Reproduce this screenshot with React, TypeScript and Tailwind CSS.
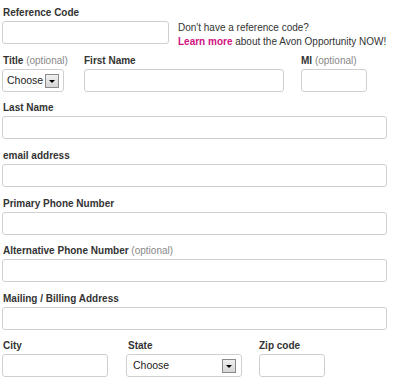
import React from "react";

const font = "font-['Liberation_Sans',Arial,sans-serif]";

function Label({ text, optional, className = "" }: { text: string; optional?: boolean; className?: string }) {
  return (
    <div className={`h-[16px] text-[10px] leading-[16px] font-bold text-[#333] whitespace-nowrap ${className}`}>
      {text}
      {optional && <span className="font-normal text-[#888]"> (optional)</span>}
    </div>
  );
}

function Input({ className = "" }: { className?: string }) {
  return <div className={`h-[23px] border border-[#cfcfcf] rounded-[3px] bg-white ${className}`} />;
}

function Select({ className = "" }: { className?: string }) {
  return (
    <div
      className={`h-[23px] border border-[#cfcfcf] rounded-[3px] bg-white flex items-center justify-between ${className}`}
    >
      <span className="text-[10.5px] text-[#222]">Choose</span>
      <span className="w-[14px] h-[14px] border border-[#8a8a8a] bg-gradient-to-b from-[#f0f0f0] to-[#d6d6d6] flex items-center justify-center">
        <span className="w-0 h-0 border-l-[3px] border-r-[3px] border-t-[3px] border-l-transparent border-r-transparent border-t-black mt-[1px]" />
      </span>
    </div>
  );
}

function Field({ text, optional, className }: { text: string; optional?: boolean; className: string }) {
  return (
    <div className={className}>
      <Label text={text} optional={optional} className="pl-[1px]" />
      <Input className="w-[385px]" />
    </div>
  );
}

export default function App() {
  return (
    <div className={`w-[400px] h-[385px] bg-white pl-[2px] pt-[5px] ${font}`}>
      {/* reference code */}
      <div className="flex h-[39px]">
        <div className="w-[167px] shrink-0">
          <Label text="Reference Code" className="pl-[1px]" />
          <Input />
        </div>
        <div className="ml-[9px] pt-[16px] text-[10px] leading-[14px] text-[#333] whitespace-nowrap">
          <div>Don't have a reference code?</div>
          <div>
            <span className="font-bold text-[#d1127f]">Learn more</span> about the Avon Opportunity NOW!
          </div>
        </div>
      </div>

      {/* title / first name / mi */}
      <div className="flex mt-[9px]">
        <div className="w-[62px] shrink-0">
          <Label text="Title" optional className="pl-[1px]" />
          <Select className="pl-[4px] pr-[4px]" />
        </div>
        <div className="w-[200px] ml-[20px] shrink-0">
          <Label text="First Name" />
          <Input />
        </div>
        <div className="w-[66px] ml-[17px] shrink-0">
          <Label text="MI" optional />
          <Input />
        </div>
      </div>

      <Field text="Last Name" className="mt-[8px]" />
      <Field text="email address" className="mt-[9px]" />
      <Field text="Primary Phone Number" className="mt-[9px]" />
      <Field text="Alternative Phone Number" optional className="mt-[8px]" />
      <Field text="Mailing / Billing Address" className="mt-[9px]" />

      {/* city / state / zip */}
      <div className="flex mt-[8px]">
        <div className="w-[106px] shrink-0">
          <Label text="City" className="pl-[1px]" />
          <Input />
        </div>
        <div className="w-[116px] ml-[18px] shrink-0">
          <Label text="State" className="pl-[2px]" />
          <Select className="pl-[6px] pr-[5px]" />
        </div>
        <div className="w-[66px] ml-[17px] shrink-0">
          <Label text="Zip code" />
          <Input />
        </div>
      </div>
    </div>
  );
}
